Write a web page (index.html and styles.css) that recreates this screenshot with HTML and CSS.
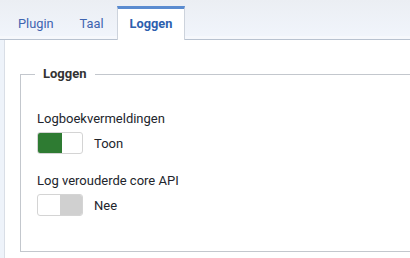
FILE: index.html
```html
<!DOCTYPE html>
<html lang="nl">
<head>
  <meta charset="UTF-8">
  <title>Loggen</title>
  <link rel="stylesheet" href="styles.css">
</head>
<body>

<ul class="tabs">
  <li class="tab">Plugin</li>
  <li class="tab">Taal</li>
  <li class="tab active">Loggen</li>
</ul>

<div class="panel">
  <fieldset class="group">
    <legend>Loggen</legend>

    <div class="field">
      <label>Logboekvermeldingen</label>
      <div class="switch-row">
        <span class="switch on"><span class="knob"></span></span>
        <span class="state">Toon</span>
      </div>
    </div>

    <div class="field">
      <label>Log verouderde core API</label>
      <div class="switch-row">
        <span class="switch off"><span class="knob"></span></span>
        <span class="state">Nee</span>
      </div>
    </div>
  </fieldset>
</div>

</body>
</html>
```

FILE: styles.css
```css
body {
  margin: 0;
  height: 258px;
  font-family: Roboto, "Liberation Sans", sans-serif;
  font-size: 13px;
  background-color: #eef3fa;
  overflow: hidden;
}

.tabs {
  display: flex;
  margin: 0;
  padding: 6px 0 0 5px;
  list-style: none;
  height: 33px;
  background: linear-gradient(#ebeef3, #f1f5fc);
  border-bottom: 1px solid #b8c2d0;
  box-shadow: inset 0 -3px 0 #f6f8fc;
}

.tab {
  padding: 0 13px;
  line-height: 36px;
  height: 33px;
  font-size: 12.8px;
  color: #3f64b0;
  box-sizing: border-box;
}

.tab.active {
  background-color: #ffffff;
  border: 1px solid #cdd3dc;
  border-top: 3px solid #5a8bd0;
  border-bottom: none;
  height: 34px;
  line-height: 30px;
  padding: 0 12px;
  font-weight: bold;
  color: #2d5fae;
  position: relative;
  z-index: 1;
}

.panel {
  margin-left: 4px;
  height: 218px;
  background-color: #ffffff;
  border-left: 1px solid #d9dee6;
  padding-top: 26px;
  box-sizing: border-box;
  height: 218px;
}

.group {
  margin: 0 0 0 15px;
  padding: 20px 0 35px 16px;
  border: 1px solid #c3c7cd;
  border-right: none;
  min-width: 0;
}

.group legend {
  margin-left: -2px;
  padding: 0 8px;
  line-height: 16px;
  font-weight: bold;
  color: #333333;
}

.field {
  margin-top: 9px;
}

.field + .field {
  margin-top: 19px;
}

.field label {
  display: block;
  line-height: 16px;
  color: #22252c;
  margin-bottom: 5px;
}

.switch-row {
  display: flex;
  align-items: center;
}

.switch {
  display: flex;
  width: 46px;
  height: 22px;
  box-sizing: border-box;
  border: 1px solid #d4d4d4;
  border-radius: 3px;
  background-color: #ffffff;
  overflow: hidden;
}

.knob {
  width: 24px;
  height: 100%;
}

.switch.on .knob {
  background-color: #2e7b32;
}

.switch.off {
  justify-content: flex-end;
}

.switch.off .knob {
  width: 22px;
  background-color: #d0d0d0;
}

.state {
  margin-left: 11px;
  color: #22252c;
}
```
